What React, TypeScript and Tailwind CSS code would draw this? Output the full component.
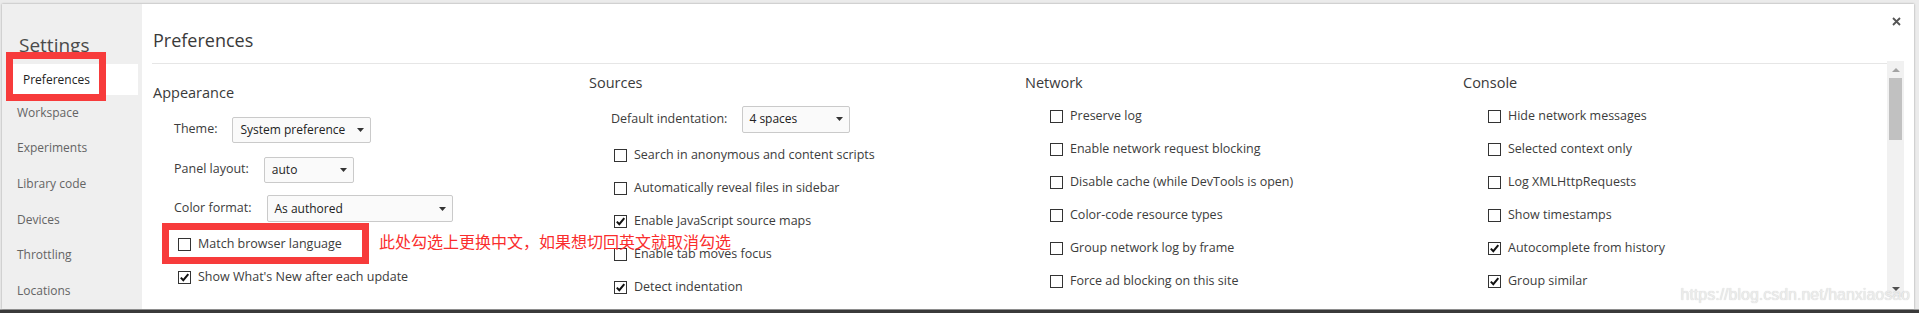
const SIDEBAR = ['Workspace', 'Experiments', 'Library code', 'Devices', 'Throttling', 'Locations']

function Box({ checked }: { checked?: boolean }) {
  return (
    <span className="flex h-[13px] w-[13px] shrink-0 items-center justify-center border border-[#333] bg-white">
      {checked && (
        <svg width="11" height="11" viewBox="0 0 11 11">
          <path d="M1.8 5.6 L4.3 8.2 L9.3 2.2" fill="none" stroke="#111" strokeWidth="2" />
        </svg>
      )}
    </span>
  )
}

function Check({ label, checked }: { label: string; checked?: boolean }) {
  return (
    <div className="flex h-[33px] items-center gap-[7px] pl-[25px]">
      <Box checked={checked} />
      <span className="whitespace-nowrap">{label}</span>
    </div>
  )
}

function Caret() {
  return (
    <svg width="7" height="4" viewBox="0 0 7 4" className="shrink-0">
      <path d="M0 0h7L3.5 4z" fill="#333" />
    </svg>
  )
}

function Header({ title }: { title: string }) {
  return <div className="flex h-[33px] items-center text-[14.5px] text-[#3a3a3a]">{title}</div>
}

export default function App() {
  return (
    <div className="flex h-[313px] w-[1919px] flex-col overflow-hidden bg-[#ebebeb] font-['Open_Sans','Noto_Sans_CJK_SC',sans-serif] text-[12.5px] text-[#3c3c3c]">
      <div className="flex min-h-0 flex-1 pl-[2px] pr-[5px] pt-[4px]">
        <div className="relative flex flex-1 bg-white shadow-[0_0_2px_rgba(0,0,0,0.35)]">
          {/* sidebar */}
          <div className="relative w-[140px] shrink-0 bg-[#efefef]">
            <div className="pl-[17px] pt-[28px] text-[19px] leading-[26px] text-[#4a4a4a]">Settings</div>
            <div className="mt-[6px]">
              <div className="ml-[10px] mr-[4px] flex h-[31px] items-center bg-white pl-[11px] text-[12px] text-[#222]">
                Preferences
              </div>
              {SIDEBAR.map((s) => (
                <div key={s} className="flex h-[35.6px] items-center pl-[15px] text-[12px] text-[#646464]">
                  {s}
                </div>
              ))}
            </div>
            <div className="absolute left-[4px] top-[48px] h-[49px] w-[100px] border-[7px] border-[#f73b3b]" />
          </div>

          {/* main */}
          <div className="flex min-w-0 flex-1 flex-col">
            <div className="h-[59px] pl-[11px] pt-[23px] text-[18px] leading-[26px] text-[#3a3a3a]">Preferences</div>
            <div className="ml-[10px] mr-[27px] border-t border-[#e6e6e6]" />
            <div className="flex min-h-0 flex-1">
              <div className="flex flex-1 overflow-hidden pl-[11px]">
                {/* Appearance */}
                <div className="w-[436px] shrink-0 pt-[12.5px]">
                  <Header title="Appearance" />
                  <div className="flex h-[40px] items-center pl-[21px]">
                    <span>Theme:</span>
                    <div className="ml-[15px] flex h-[26px] w-[139px] items-center justify-between rounded-[2px] border border-[#cacaca] bg-[#fafafa] pl-[7px] pr-[6px] text-[12px] text-[#222]">
                      <span>System preference</span>
                      <Caret />
                    </div>
                  </div>
                  <div className="flex h-[40px] items-center pl-[21px]">
                    <span>Panel layout:</span>
                    <div className="ml-[15px] flex h-[26px] w-[90px] items-center justify-between rounded-[2px] border border-[#cacaca] bg-[#fafafa] pl-[7px] pr-[6px] text-[12px] text-[#222]">
                      <span>auto</span>
                      <Caret />
                    </div>
                  </div>
                  <div className="flex h-[38px] items-center pl-[21px]">
                    <span>Color format:</span>
                    <div className="ml-[15px] flex h-[27px] w-[186px] items-center justify-between rounded-[2px] border border-[#cacaca] bg-[#fafafa] pl-[7px] pr-[6px] text-[12px] text-[#222]">
                      <span>As authored</span>
                      <Caret />
                    </div>
                  </div>
                  <div className="relative">
                    <Check label="Match browser language" />
                    <div className="absolute left-[9px] top-[-5px] h-[41px] w-[207px] border-[7px] border-[#f73b3b]" />
                    <div className="absolute left-[226px] top-[4px] z-10 whitespace-nowrap text-[16px] leading-[20px] text-[#fa2d2d]">
                      此处勾选上更换中文，如果想切回英文就取消勾选
                    </div>
                  </div>
                  <Check label="Show What's New after each update" checked />
                </div>

                {/* Sources */}
                <div className="w-[436px] shrink-0 pt-[2.5px]">
                  <Header title="Sources" />
                  <div className="flex h-[39px] items-center pl-[22px]">
                    <span>Default indentation:</span>
                    <div className="ml-[15px] flex h-[27px] w-[108px] items-center justify-between rounded-[2px] border border-[#cacaca] bg-[#fafafa] pl-[6px] pr-[6px] text-[12px] text-[#222]">
                      <span>4 spaces</span>
                      <Caret />
                    </div>
                  </div>
                  <Check label="Search in anonymous and content scripts" />
                  <Check label="Automatically reveal files in sidebar" />
                  <Check label="Enable JavaScript source maps" checked />
                  <Check label="Enable tab moves focus" />
                  <Check label="Detect indentation" checked />
                </div>

                {/* Network */}
                <div className="w-[438px] shrink-0 pt-[2.5px]">
                  <Header title="Network" />
                  <Check label="Preserve log" />
                  <Check label="Enable network request blocking" />
                  <Check label="Disable cache (while DevTools is open)" />
                  <Check label="Color-code resource types" />
                  <Check label="Group network log by frame" />
                  <Check label="Force ad blocking on this site" />
                </div>

                {/* Console */}
                <div className="min-w-0 flex-1 pt-[2.5px]">
                  <Header title="Console" />
                  <Check label="Hide network messages" />
                  <Check label="Selected context only" />
                  <Check label="Log XMLHttpRequests" />
                  <Check label="Show timestamps" />
                  <Check label="Autocomplete from history" checked />
                  <Check label="Group similar" checked />
                </div>
              </div>

              {/* scrollbar */}
              <div className="-mt-[3px] mb-[12px] mr-[10px] flex w-[17px] shrink-0 flex-col bg-[#f1f1f1]">
                <div className="flex h-[17px] items-center justify-center">
                  <svg width="8" height="4" viewBox="0 0 8 4">
                    <path d="M0 4h8L4 0z" fill="#a3a3a3" />
                  </svg>
                </div>
                <div className="mx-[2px] h-[62px] bg-[#c1c1c1]" />
                <div className="flex-1" />
                <div className="flex h-[17px] items-center justify-center">
                  <svg width="8" height="4" viewBox="0 0 8 4">
                    <path d="M0 0h8L4 4z" fill="#505050" />
                  </svg>
                </div>
              </div>
            </div>
          </div>

          {/* close */}
          <svg width="9" height="9" viewBox="0 0 9 9" className="absolute right-[13.5px] top-[12.5px]">
            <path d="M1 1L8 8M8 1L1 8" stroke="#555" strokeWidth="1.8" />
          </svg>

          {/* watermark */}
          <div className="absolute right-[4px] top-[281px] whitespace-nowrap font-['Liberation_Sans',sans-serif] text-[16px] leading-[20px] text-[#ececec] [text-shadow:0_0_1px_rgba(0,0,0,0.22)]">
            https://blog.csdn.net/hanxiaosao
          </div>
        </div>
      </div>
      <div className="h-[4px] shrink-0 border-t border-[#a0a0a0] bg-[#3a3a3a]" />
    </div>
  )
}
